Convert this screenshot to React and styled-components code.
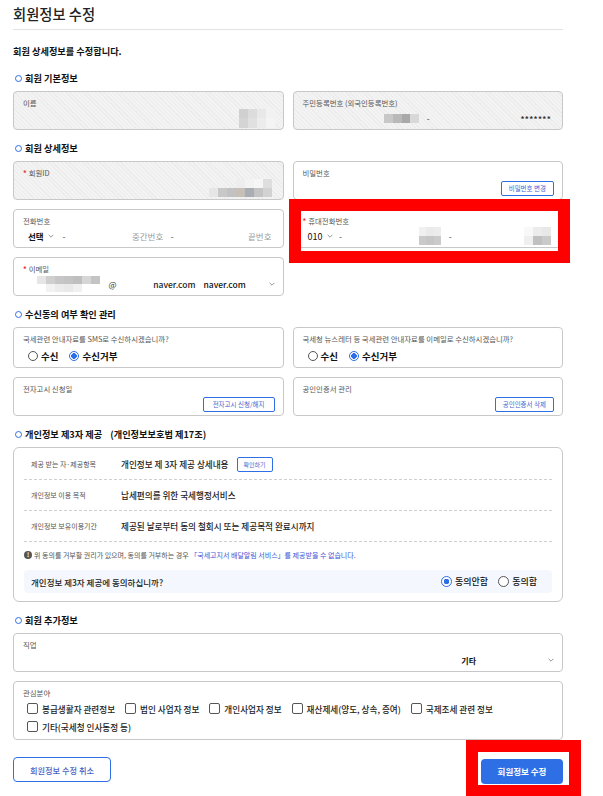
import styled, { createGlobalStyle } from "styled-components";

const GlobalStyle = createGlobalStyle`
  html, body {
    margin: 0;
    padding: 0;
    background: #fff;
  }
  body {
    font-family: "Noto Sans CJK KR", "Noto Sans", sans-serif;
    color: #222;
  }
  * {
    box-sizing: border-box;
  }
`;

const blue = "#2e6fe8";
const stripes =
  "repeating-linear-gradient(45deg, #f3f3f3 0 2px, #ececec 2px 3px)";

const Page = styled.main`
  width: 563px;
  padding: 0 0 15px 13px;
`;

const Title = styled.h2`
  margin: 0;
  padding: 4px 0 5px;
  font-size: 14.3px;
  line-height: 20px;
  font-weight: 500;
  color: #222;
  border-bottom: 1px solid #e3e3e3;
`;

const Lead = styled.p`
  margin: 15px 0 14px;
  font-size: 9.2px;
  line-height: 13px;
  font-weight: 700;
  color: #111;
`;

const Section = styled.section`
  & + & {
    margin-top: 12px;
  }
`;

const SectionTitle = styled.h3`
  display: flex;
  align-items: center;
  gap: 3px;
  height: 12px;
  margin: 0 0 7px;
  padding-left: 2px;
  font-size: 9.2px;
  line-height: 12px;
  font-weight: 700;
  color: #111;

  &::before {
    content: "";
    width: 5px;
    height: 5px;
    border: 1.2px solid ${blue};
    border-radius: 50%;
  }

  small {
    margin-left: 5px;
    font-size: inherit;
  }
`;

const Grid = styled.div`
  display: grid;
  grid-template-columns: 1fr 1fr;
  gap: 9px;
`;

const Field = styled.div`
  height: ${(p) => p.$h || 39}px;
  padding: 6px 8px ${(p) => p.$pb ?? 4}px 9px;
  border: 1px solid #c8c8c8;
  border-radius: 4px;
  background: ${(p) => (p.$locked ? stripes : "#fff")};
  display: flex;
  flex-direction: column;
  justify-content: space-between;
  grid-column: ${(p) => (p.$wide ? "1 / -1" : "auto")};
`;

const Label = styled.div`
  font-size: 7.4px;
  line-height: 10px;
  color: #555;

  b {
    color: #e8383d;
    font-weight: 700;
    margin-right: 2px;
  }
`;

const ValueRow = styled.div`
  display: flex;
  align-items: center;
  justify-content: ${(p) => p.$justify || "flex-start"};
  height: 14px;
  font-size: 8.5px;
  color: #222;
`;

const Input = styled.span`
  flex: ${(p) => (p.$w ? "none" : 1)};
  width: ${(p) => (p.$w ? `${p.$w}px` : "auto")};
  display: flex;
  justify-content: flex-end;
  align-items: center;
  padding-right: 3px;
  color: ${(p) => (p.$placeholder ? "#9a9a9a" : "#222")};
  font-weight: ${(p) => (p.$bold ? 500 : 400)};
`;

const Dash = styled.span`
  width: 12px;
  text-align: center;
  color: #444;
`;

const Select = styled.span`
  width: ${(p) => p.$w}px;
  display: flex;
  align-items: center;
  justify-content: ${(p) => (p.$spread ? "space-between" : "flex-start")};
  gap: 4px;
  padding-left: 5px;
  font-size: ${(p) => p.$size || 8.5}px;
  font-weight: ${(p) => p.$weight || 700};
  color: #111;
`;

const Stars = styled.span`
  font-size: 8px;
  letter-spacing: 0.3px;
  color: #333;
  font-weight: 700;
`;

const At = styled.span`
  padding: 0 4px 0 5px;
  color: #333;
`;

const Job = styled.span`
  margin-right: 72px;
  font-size: 8px;
  font-weight: 700;
  color: #111;
`;

const SmallButton = styled.button`
  height: 15px;
  padding: 0 ${(p) => p.$px || 7}px;
  border: 1px solid ${blue};
  border-radius: 2px;
  background: #fff;
  color: #4a5fd0;
  font-family: inherit;
  font-size: ${(p) => p.$size || 6.5}px;
  line-height: 13px;
  cursor: pointer;
`;

const RadioGroup = styled.div`
  display: flex;
  align-items: center;
  gap: ${(p) => p.$gap ?? 11}px;
  padding-left: ${(p) => p.$pl ?? 5}px;
`;

const RadioItem = styled.label`
  display: flex;
  align-items: center;
  gap: 3px;
  font-size: ${(p) => p.$size || 9.5}px;
  font-weight: ${(p) => p.$weight || 700};
  color: #111;
`;

const RadioDot = styled.span`
  width: ${(p) => p.$d || 10}px;
  height: ${(p) => p.$d || 10}px;
  border-radius: 50%;
  border: ${(p) => (p.$on ? `1.3px solid ${blue}` : "1px solid #555")};
  background: ${(p) =>
    p.$on
      ? `radial-gradient(circle, ${blue} 0 2.6px, #fff 3px)`
      : "#fff"};
`;

const Highlight = styled.div`
  position: relative;
`;

const RedFrame = styled.span`
  position: absolute;
  top: ${(p) => p.$t}px;
  left: ${(p) => p.$l}px;
  right: ${(p) => p.$r}px;
  bottom: ${(p) => p.$b}px;
  border: 12px solid #ff0000;
  border-bottom-width: ${(p) => p.$bb || 12}px;
  pointer-events: none;
  z-index: 2;
`;

const MosaicGrid = styled.span`
  display: grid;
  grid-template-columns: repeat(${(p) => p.$cols}, ${(p) => p.$cw}px);
  grid-auto-rows: ${(p) => p.$ch}px;
`;

const Tile = styled.span`
  background: ${(p) => p.$c};
`;

const Mosaic = ({ rows, cw = 9, ch = 9 }) => (
  <MosaicGrid $cols={rows[0].length} $cw={cw} $ch={ch}>
    {rows.flat().map((c, i) => (
      <Tile key={i} $c={c} />
    ))}
  </MosaicGrid>
);

const Chevron = () => (
  <svg width="6" height="4" viewBox="0 0 6 4" aria-hidden="true">
    <path d="M0.6 0.8 L3 3.2 L5.4 0.8" fill="none" stroke="#8a8a8a" strokeWidth="0.9" />
  </svg>
);

const ConsentBox = styled.div`
  border: 1px solid #c8c8c8;
  border-radius: 6px;
  padding: 1px 10px 8px;
`;

const InfoRow = styled.div`
  display: flex;
  align-items: center;
  height: 31px;
  padding-left: 7px;
  border-bottom: 1px dashed #d0d0d0;
`;

const InfoLabel = styled.div`
  width: 90px;
  font-size: 7px;
  color: #555;
`;

const InfoValue = styled.div`
  display: flex;
  align-items: center;
  gap: 8px;
  font-size: 8.6px;
  font-weight: 500;
  color: #222;
`;

const Notice = styled.p`
  display: flex;
  align-items: center;
  gap: 2px;
  margin: 7px 0 0;
  font-size: 7px;
  line-height: 12px;
  color: #555;

  em {
    font-style: normal;
    color: #3d55d6;
  }
`;

const InfoIcon = styled.span`
  width: 8px;
  height: 8px;
  border-radius: 50%;
  background: #555;
  color: #fff;
  font-size: 6px;
  font-weight: 700;
  line-height: 8px;
  text-align: center;
`;

const Agree = styled.div`
  display: flex;
  align-items: center;
  justify-content: space-between;
  height: 23px;
  margin-top: 9px;
  padding: 0 15px 0 7px;
  border-radius: 4px;
  background: #f4f7fd;
  font-size: 8.5px;
  font-weight: 500;
  color: #222;
`;

const CheckList = styled.div`
  display: flex;
  flex-wrap: wrap;
  column-gap: 10px;
  row-gap: 7px;
  padding-left: 4px;
`;

const CheckItem = styled.label`
  display: flex;
  align-items: center;
  gap: 4px;
  height: 11px;
  font-size: 8.6px;
  font-weight: 500;
  color: #222;
`;

const CheckBox = styled.span`
  width: 11px;
  height: 11px;
  border: 1px solid #555;
  border-radius: 2px;
  background: #fff;
`;

const Actions = styled.div`
  display: flex;
  justify-content: space-between;
  align-items: center;
  margin-top: 16px;
`;

const CancelButton = styled.button`
  width: 98px;
  height: 25px;
  border: 1px solid ${blue};
  border-radius: 4px;
  background: #fff;
  color: #4a5fc4;
  font-family: inherit;
  font-size: 8.2px;
  font-weight: 500;
`;

const SubmitButton = styled.button`
  width: 82px;
  height: 25px;
  border: none;
  border-radius: 4px;
  background: #2f6fe6;
  color: #fff;
  font-family: inherit;
  font-size: 8.5px;
  font-weight: 700;
`;

const W = "transparent";

const interests = [
  "봉급생활자 관련정보",
  "법인 사업자 정보",
  "개인사업자 정보",
  "재산제세(양도, 상속, 증여)",
  "국제조세 관련 정보",
  "기타(국세청 인사동정 등)",
];

export default function App() {
  return (
    <Page>
      <GlobalStyle />
      <Title>회원정보 수정</Title>
      <Lead>회원 상세정보를 수정합니다.</Lead>

      <Section>
        <SectionTitle>회원 기본정보</SectionTitle>
        <Grid>
          <Field $locked>
            <Label>이름</Label>
            <ValueRow $justify="flex-end">
              <Mosaic
                rows={[
                  ["#d0d0d0", "#dcdcdc", "#e8e8e8", "#f2f2f2"],
                  ["#d4d4d4", "#e0e0e0", "#ececec", "#f4f4f4"],
                ]}
                ch={9.5}
              />
            </ValueRow>
          </Field>
          <Field $locked>
            <Label>주민등록번호 (외국인등록번호)</Label>
            <ValueRow>
              <Input>
                <Mosaic rows={[["#c8c8c8", "#b9b9b9", "#a9a9a9", "#d8d8d8"]]} cw={8.8} />
              </Input>
              <Dash>-</Dash>
              <Input>
                <Stars>*******</Stars>
              </Input>
            </ValueRow>
          </Field>
        </Grid>
      </Section>

      <Section>
        <SectionTitle>회원 상세정보</SectionTitle>
        <Grid>
          <Field $locked>
            <Label>
              <b>*</b>회원ID
            </Label>
            <ValueRow $justify="flex-end">
              <Input>
                <Mosaic
                  rows={[
                    [W, W, W, "#eeeeee", "#f3f3f3", "#f6f6f6", "#dedede"],
                    ["#e6e6e6", "#c8c8c8", "#c2c2c2", "#c7c0b8", "#a9aeb4", "#c4c4c4", "#d2d2d2"],
                  ]}
                />
              </Input>
            </ValueRow>
          </Field>
          <Field>
            <Label>비밀번호</Label>
            <ValueRow $justify="flex-end">
              <SmallButton>비밀번호 변경</SmallButton>
            </ValueRow>
          </Field>

          <Field>
            <Label>전화번호</Label>
            <ValueRow>
              <Select $w={35}>
                선택 <Chevron />
              </Select>
              <Dash>-</Dash>
              <Input $placeholder>중간번호</Input>
              <Dash>-</Dash>
              <Input $placeholder>끝번호</Input>
            </ValueRow>
          </Field>
          <Highlight>
            <Field>
              <Label>
                <b>*</b>휴대전화번호
              </Label>
              <ValueRow>
                <Select $w={32} $weight={400} $size={9}>
                  010 <Chevron />
                </Select>
                <Dash>-</Dash>
                <Input>
                  <Mosaic
                    rows={[
                      ["#f0f0f0", "#eaeaea", "#ececec"],
                      ["#cacaca", "#c6c6c6", "#cbcbcb"],
                    ]}
                    cw={7.4}
                  />
                </Input>
                <Dash>-</Dash>
                <Input>
                  <Mosaic
                    rows={[
                      ["#f8f8f8", "#ececec", "#e8e8e8"],
                      ["#efefef", "#c0c0c0", "#cacaca"],
                    ]}
                  />
                </Input>
              </ValueRow>
            </Field>
            <RedFrame $t={-10} $l={-4} $r={-7} $b={-15} />
          </Highlight>

          <Field>
            <Label>
              <b>*</b>이메일
            </Label>
            <ValueRow>
              <Input>
                <Mosaic
                  rows={[
                    ["#e6e6e6", "#cfcfcf", "#c6c6c6", "#c3c3c3", "#bfbfbf", "#d6d6d6", "#c4c4c4"],
                    [W, "#f2f2f2", "#ececec", "#e9e9e9", "#f0f0f0", W, W],
                  ]}
                  ch={8}
                />
              </Input>
              <At>@</At>
              <Input $w={78} $bold>
                naver.com
              </Input>
              <Select $w={76} $spread $weight={500}>
                naver.com <Chevron />
              </Select>
            </ValueRow>
          </Field>
        </Grid>
      </Section>

      <Section>
        <SectionTitle>수신동의 여부 확인 관리</SectionTitle>
        <Grid>
          <Field $h={41}>
            <Label>국세관련 안내자료를 SMS로 수신하시겠습니까?</Label>
            <ValueRow>
              <RadioGroup>
                <RadioItem>
                  <RadioDot /> 수신
                </RadioItem>
                <RadioItem>
                  <RadioDot $on /> 수신거부
                </RadioItem>
              </RadioGroup>
            </ValueRow>
          </Field>
          <Field $h={41}>
            <Label>국세청 뉴스레터 등 국세관련 안내자료를 이메일로 수신하시겠습니까?</Label>
            <ValueRow>
              <RadioGroup>
                <RadioItem>
                  <RadioDot /> 수신
                </RadioItem>
                <RadioItem>
                  <RadioDot $on /> 수신거부
                </RadioItem>
              </RadioGroup>
            </ValueRow>
          </Field>
          <Field>
            <Label>전자고시 신청일</Label>
            <ValueRow $justify="flex-end">
              <SmallButton $px={9}>전자고시 신청/해지</SmallButton>
            </ValueRow>
          </Field>
          <Field>
            <Label>공인인증서 관리</Label>
            <ValueRow $justify="flex-end">
              <SmallButton>공인인증서 삭제</SmallButton>
            </ValueRow>
          </Field>
        </Grid>
      </Section>

      <Section>
        <SectionTitle>
          개인정보 제3자 제공<small>(개인정보보호법 제17조)</small>
        </SectionTitle>
        <ConsentBox>
          <InfoRow>
            <InfoLabel>제공 받는 자·제공항목</InfoLabel>
            <InfoValue>
              개인정보 제 3자 제공 상세내용
              <SmallButton $size={6} $px={6}>
                확인하기
              </SmallButton>
            </InfoValue>
          </InfoRow>
          <InfoRow>
            <InfoLabel>개인정보 이용 목적</InfoLabel>
            <InfoValue>납세편의를 위한 국세행정서비스</InfoValue>
          </InfoRow>
          <InfoRow>
            <InfoLabel>개인정보 보유이용기간</InfoLabel>
            <InfoValue>제공된 날로부터 동의 철회시 또는 제공목적 완료시까지</InfoValue>
          </InfoRow>
          <Notice>
            <InfoIcon>!</InfoIcon>
            <span>
              위 동의를 거부할 권리가 있으며, 동의를 거부하는 경우{" "}
              <em>「국세고지서 배달알림 서비스」를 제공받을 수 없습니다.</em>
            </span>
          </Notice>
          <Agree>
            개인정보 제3자 제공에 동의하십니까?
            <RadioGroup $pl={0} $gap={10}>
              <RadioItem $size={9} $weight={500}>
                <RadioDot $on $d={11} /> 동의안함
              </RadioItem>
              <RadioItem $size={9} $weight={500}>
                <RadioDot $d={11} /> 동의함
              </RadioItem>
            </RadioGroup>
          </Agree>
        </ConsentBox>
      </Section>

      <Section>
        <SectionTitle>회원 추가정보</SectionTitle>
        <Grid>
          <Field $wide>
            <Label>직업</Label>
            <ValueRow $justify="flex-end">
              <Job>기타</Job>
              <Chevron />
            </ValueRow>
          </Field>
          <Field $wide $h={59} $pb={7}>
            <Label>관심분야</Label>
            <CheckList>
              {interests.map((item) => (
                <CheckItem key={item}>
                  <CheckBox />
                  {item}
                </CheckItem>
              ))}
            </CheckList>
          </Field>
        </Grid>
      </Section>

      <Actions>
        <CancelButton>회원정보 수정 취소</CancelButton>
        <Highlight>
          <SubmitButton>회원정보 수정</SubmitButton>
          <RedFrame $t={-16} $l={-15} $r={-18} $b={-15} $bb={14} />
        </Highlight>
      </Actions>
    </Page>
  );
}
